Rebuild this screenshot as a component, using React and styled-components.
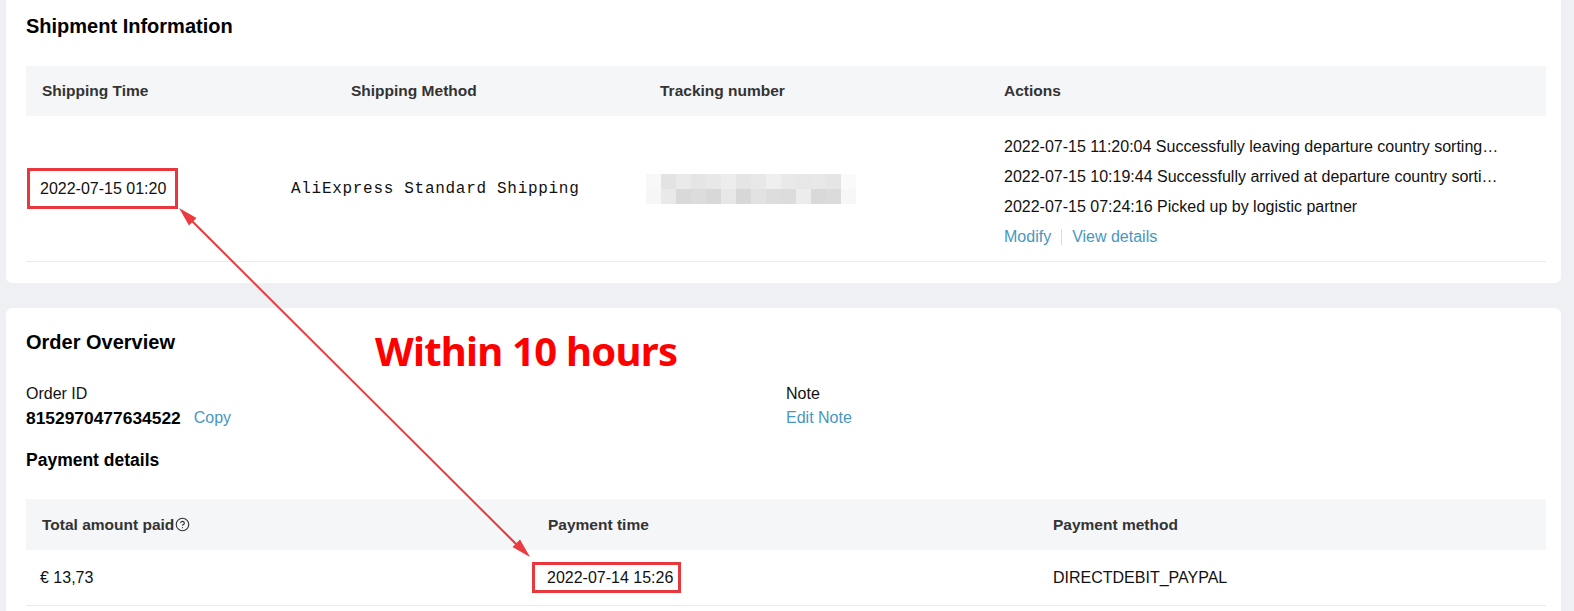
import React from "react";
import styled, { createGlobalStyle } from "styled-components";
import { CircleHelp } from "lucide-react";

const GlobalStyle = createGlobalStyle`
	body {
		margin: 0;
		background: #eff0f4;
		font-family: "Liberation Sans", Arial, sans-serif;
		color: #111;
	}
`;

const trackingBlocks = [
	["#f8f8f8", "#e3e3e3", "#eaeaea", "#e5e5e5", "#e8e8e8", "#ededed", "#e5e5e5", "#e8e8e8", "#efefef", "#e9e9e9", "#e7e7e7", "#e8e8e8", "#e5e5e5", "#fafafa"],
	["#f6f6f6", "#e9e9e9", "#d9d9d9", "#dcdcdc", "#d8d8d8", "#e7e7e7", "#d7d7d7", "#e2e2e2", "#dddddd", "#dcdcdc", "#ececec", "#d9d9d9", "#dbdbdb", "#f7f7f7"],
];

const trackingEvents = [
	"2022-07-15 11:20:04 Successfully leaving departure country sorting center",
	"2022-07-15 10:19:44 Successfully arrived at departure country sorting center",
	"2022-07-15 07:24:16 Picked up by logistic partner",
];

const App = () => {
	return (
		<>
			<GlobalStyle />
			<Page>
				<Card $first>
					<CardTitle>Shipment Information</CardTitle>
					<Table>
						<HeadRow $cols="309px 309px 344px 1fr">
							<HeadCell>Shipping Time</HeadCell>
							<HeadCell>Shipping Method</HeadCell>
							<HeadCell>Tracking number</HeadCell>
							<HeadCell>Actions</HeadCell>
						</HeadRow>
						<BodyRow $cols="264px 354px 344px 1fr" $height="145px">
							<Cell $pad="1px">
								<RedBox $h="35px" $pad="0 9px 0 10px">2022-07-15 01:20</RedBox>
							</Cell>
							<Cell $pad="1px">
								<MonoText>AliExpress Standard Shipping</MonoText>
							</Cell>
							<Cell $pad="2px">
								<svg width="210" height="30" viewBox="0 0 210 30">
									{trackingBlocks.map((row, r) =>
										row.map((c, i) => (
											<rect key={`${r}-${i}`} x={i * 15} y={r * 15} width="15.2" height="15.2" fill={c} />
										))
									)}
								</svg>
							</Cell>
							<Cell>
								<ActionList>
									{trackingEvents.map((ev) => (
										<ActionLine key={ev}>{ev}</ActionLine>
									))}
									<LinkRow>
										<Link>Modify</Link>
										<Divider />
										<Link>View details</Link>
									</LinkRow>
								</ActionList>
							</Cell>
						</BodyRow>
					</Table>
				</Card>

				<Card>
					<CardTitle>Order Overview</CardTitle>
					<InfoGrid>
						<div>
							<Label>Order ID</Label>
							<IdRow>
								<OrderNumber>8152970477634522</OrderNumber>
								<Link>Copy</Link>
							</IdRow>
						</div>
						<div>
							<Label>Note</Label>
							<Link>Edit Note</Link>
						</div>
					</InfoGrid>
					<SubTitle>Payment details</SubTitle>
					<Table $gap="27px">
						<HeadRow $cols="506px 505px 1fr" $height="51px">
							<HeadCell>
								Total amount paid
								<CircleHelp size={15} strokeWidth={1.8} color="#333" />
							</HeadCell>
							<HeadCell>Payment time</HeadCell>
							<HeadCell>Payment method</HeadCell>
						</HeadRow>
						<BodyRow $cols="506px 505px 1fr" $height="55px">
							<Cell $pad="14px">€ 13,73</Cell>
							<Cell $pad="0">
								<RedBox $h="25px" $pad="0 5px 0 12px">2022-07-14 15:26</RedBox>
							</Cell>
							<Cell>DIRECTDEBIT_PAYPAL</Cell>
						</BodyRow>
					</Table>
				</Card>

				<Overlay width="1574" height="611" viewBox="0 0 1574 611">
					<line x1="190" y1="219" x2="519" y2="547" stroke="#ec3a3e" strokeWidth="2" />
					<polygon points="179,208 196.5,218 189,225.5" fill="#ec3a3e" />
					<polygon points="530,557 512.5,547 520,539.5" fill="#ec3a3e" />
				</Overlay>
				<Callout>Within 10 hours</Callout>
			</Page>
		</>
	);
};

const Page = styled.div`
	position: relative;
	display: flex;
	flex-direction: column;
	gap: 25px;
	padding: 0 13px 0 6px;
	min-height: 611px;
	overflow: hidden;
`;

const Card = styled.section`
	background: #fff;
	border-radius: ${({ $first }) => ($first ? "0 0 6px 6px" : "6px")};
	padding: ${({ $first }) => ($first ? "14px 15px 21px 20px" : "22px 15px 40px 20px")};
`;

const CardTitle = styled.h2`
	margin: 0;
	font-size: 20px;
	line-height: 24px;
	font-weight: 700;
	color: #000;
`;

const Table = styled.div`
	margin-top: ${({ $gap }) => $gap || "28px"};
`;

const HeadRow = styled.div`
	display: grid;
	grid-template-columns: ${({ $cols }) => $cols};
	height: ${({ $height }) => $height || "50px"};
	align-items: center;
	background: #f5f6f8;
`;

const HeadCell = styled.div`
	display: flex;
	align-items: center;
	gap: 1px;
	padding-left: 16px;
	font-size: 15.5px;
	font-weight: 700;
	color: #333;
`;

const BodyRow = styled.div`
	display: grid;
	grid-template-columns: ${({ $cols }) => $cols};
	height: ${({ $height }) => $height};
	align-items: center;
	border-bottom: 1px solid #ebebeb;
`;

const Cell = styled.div`
	padding-left: ${({ $pad }) => $pad || "16px"};
	font-size: 16px;
	color: #111;
	display: flex;
	align-items: center;
`;

const RedBox = styled.span`
	display: inline-block;
	border: 3px solid #e8383d;
	padding: ${({ $pad }) => $pad};
	line-height: ${({ $h }) => $h};
	font-size: 16px;
	color: #111;
`;

const MonoText = styled.span`
	font-family: "Liberation Mono", "Courier New", monospace;
	font-size: 16px;
	letter-spacing: 0.7px;
	color: #111;
`;

const ActionList = styled.div`
	display: flex;
	flex-direction: column;
	margin-top: 7px;
	min-width: 0;
`;

const ActionLine = styled.div`
	max-width: 497px;
	line-height: 30px;
	white-space: nowrap;
	overflow: hidden;
	text-overflow: ellipsis;
	color: #111;
`;

const LinkRow = styled.div`
	display: flex;
	align-items: center;
	height: 30px;
`;

const Link = styled.span`
	color: #4797c0;
	font-size: 16px;
	line-height: 24px;
	cursor: pointer;
`;

const Divider = styled.span`
	width: 1px;
	height: 16px;
	background: #dcdcdc;
	margin: 0 10px;
`;

const InfoGrid = styled.div`
	display: grid;
	grid-template-columns: 760px 1fr;
	margin-top: 28px;
	& > div {
		display: flex;
		flex-direction: column;
		align-items: flex-start;
	}
`;

const Label = styled.div`
	font-size: 16px;
	line-height: 24px;
	color: #111;
`;

const IdRow = styled.div`
	display: flex;
	align-items: center;
	gap: 13px;
`;

const OrderNumber = styled.span`
	font-size: 17.4px;
	line-height: 24px;
	font-weight: 700;
	color: #000;
`;

const SubTitle = styled.h3`
	margin: 18px 0 0;
	font-size: 17.5px;
	line-height: 24px;
	font-weight: 700;
	color: #000;
`;

const Overlay = styled.svg`
	position: absolute;
	top: 0;
	left: 0;
	pointer-events: none;
`;

const Callout = styled.div`
	position: absolute;
	left: 375px;
	top: 331px;
	font-family: "Noto Sans", "Liberation Sans", sans-serif;
	font-size: 40px;
	line-height: 40px;
	font-weight: 700;
	color: #ff0000;
	letter-spacing: -0.75px;
	white-space: nowrap;
`;

export default App;
